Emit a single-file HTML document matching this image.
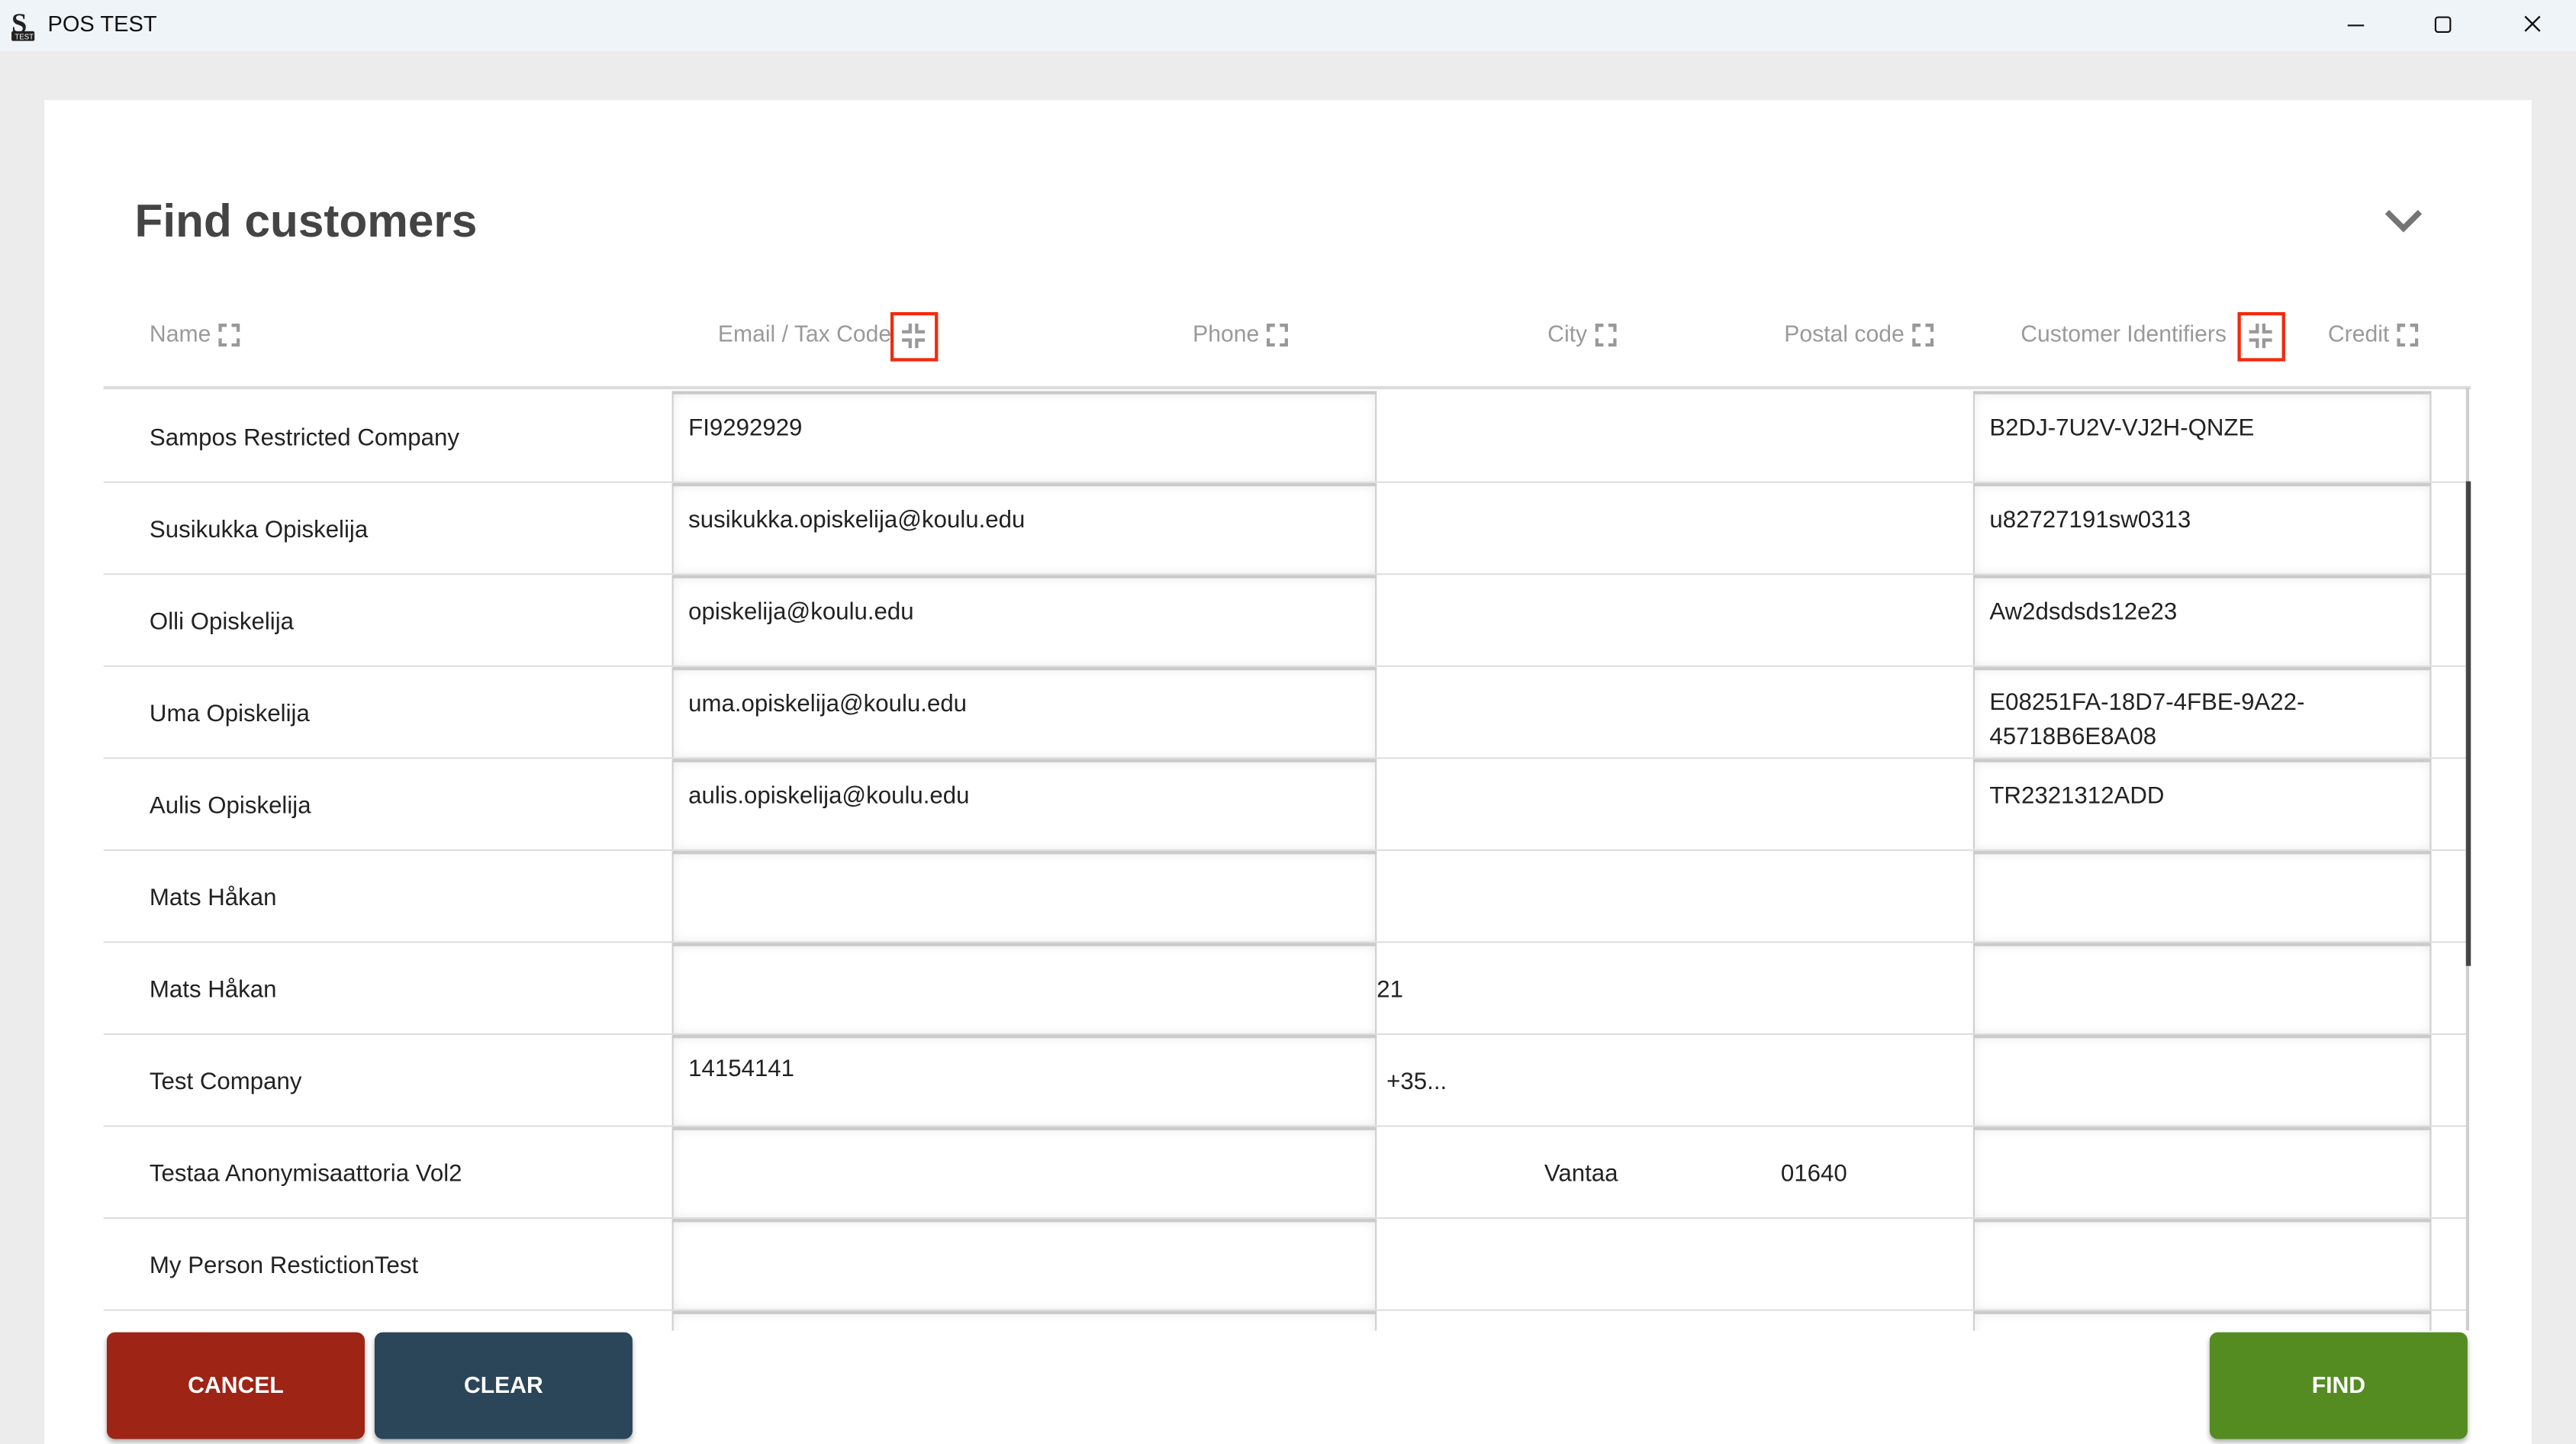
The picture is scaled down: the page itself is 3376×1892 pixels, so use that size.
<!DOCTYPE html>
<html><head><meta charset="utf-8"><style>
html,body{margin:0;padding:0;width:3376px;height:1892px;overflow:hidden;background:#ececec;}
#w{position:absolute;left:0;top:0;width:1568px;height:879px;transform:scale(2.15306,2.1524);transform-origin:0 0;font-family:"Liberation Sans",sans-serif;}
.a{position:absolute;white-space:nowrap;}
.tb{left:0;top:0;width:1568px;height:31px;background:#eff4f9;}
.panel{left:27px;top:61px;width:1514px;height:818px;background:#fff;}
.h{color:#9a9a9a;font-size:14px;top:195px;}
.ic{display:inline-block;width:13px;height:14px;vertical-align:-3px;margin-left:5px;}
.rb{border:2px solid #f22a0f;width:25px;height:26px;top:190px;}
.row{left:0;width:1438px;height:55px;border-bottom:1.5px solid #dedede;}
.t{font-size:14.5px;color:#222;}
.cell{background:#fff;border-left:1.5px solid #cfcfcf;border-right:1.5px solid #cfcfcf;border-top:2.5px solid #cacaca;box-shadow:0 0 6px rgba(0,0,0,.08) inset;}
.btn{top:811px;width:157px;height:65px;border-radius:5px;color:#fff;font-weight:bold;font-size:14px;text-align:center;line-height:65px;box-shadow:0 2px 3px rgba(0,0,0,.3);}
</style></head><body><div id="w">
<div class="a tb"></div>
<svg class="a" style="left:6px;top:6px" width="17" height="19" viewBox="0 0 17 19"><text x="1" y="14" font-family="Liberation Serif" font-weight="bold" font-size="17" fill="#222">S</text><rect x="1" y="13" width="14" height="6" rx="1" fill="#222"/><text x="3" y="18" font-size="4.5" fill="#fff">TEST</text></svg>
<div class="a" style="left:29px;top:7px;font-size:13.5px;color:#111;">POS TEST</div>
<div class="a" style="left:1429px;top:15px;width:10px;height:1px;background:#111"></div>
<div class="a" style="left:1482px;top:10px;width:8px;height:8px;border:1px solid #111;border-radius:2px"></div>
<svg class="a" style="left:1536px;top:9px" width="11" height="11"><path d="M1 1L10 10M10 1L1 10" stroke="#111" stroke-width="1.1"/></svg>
<div class="a panel"></div>
<div class="a" style="left:82px;top:119px;font-size:28px;font-weight:bold;color:#444;">Find customers</div>
<svg class="a" style="left:1451px;top:126px" width="24" height="16"><path d="M2 3L12 13L22 3" stroke="#747474" stroke-width="3.5" fill="none"/></svg>

<div class="a h" style="left:91px">Name<svg class="ic" viewBox="0 0 13 14"><path d="M1 5V1H5M8 1H12V5M12 9V13H8M5 13H1V9" stroke="#999" stroke-width="2" fill="none"/></svg></div>
<div class="a h" style="left:437px">Email / Tax Code</div>
<svg class="a" style="left:549px;top:197px" width="14" height="15"><path d="M5 0V5H0M9 0V5H14M14 10H9V15M5 15V10H0" stroke="#999" stroke-width="2" fill="none"/></svg>
<div class="a rb" style="left:542px"></div>
<div class="a h" style="left:726px">Phone<svg class="ic" viewBox="0 0 13 14"><path d="M1 5V1H5M8 1H12V5M12 9V13H8M5 13H1V9" stroke="#999" stroke-width="2" fill="none"/></svg></div>
<div class="a h" style="left:942px">City<svg class="ic" viewBox="0 0 13 14"><path d="M1 5V1H5M8 1H12V5M12 9V13H8M5 13H1V9" stroke="#999" stroke-width="2" fill="none"/></svg></div>
<div class="a h" style="left:1086px">Postal code<svg class="ic" viewBox="0 0 13 14"><path d="M1 5V1H5M8 1H12V5M12 9V13H8M5 13H1V9" stroke="#999" stroke-width="2" fill="none"/></svg></div>
<div class="a h" style="left:1230px">Customer Identifiers</div>
<svg class="a" style="left:1369px;top:197px" width="14" height="15"><path d="M5 0V5H0M9 0V5H14M14 10H9V15M5 15V10H0" stroke="#999" stroke-width="2" fill="none"/></svg>
<div class="a rb" style="left:1362px"></div>
<div class="a h" style="left:1417px">Credit<svg class="ic" viewBox="0 0 13 14"><path d="M1 5V1H5M8 1H12V5M12 9V13H8M5 13H1V9" stroke="#999" stroke-width="2" fill="none"/></svg></div>

<div class="a" style="left:63px;top:235px;width:1441px;height:2px;background:#dcdcdc"></div>
<div class="a" style="left:63px;top:238px;width:1441px;height:572px;overflow:hidden;">
<div style="position:absolute;left:0;top:0;width:1441px;height:572px;">
<div class="a row" style="top:0"></div><div class="a row" style="top:56px"></div><div class="a row" style="top:112px"></div><div class="a row" style="top:168px"></div><div class="a row" style="top:224px"></div><div class="a row" style="top:280px"></div><div class="a row" style="top:336px"></div><div class="a row" style="top:392px"></div><div class="a row" style="top:448px"></div><div class="a row" style="top:504px"></div>
<div class="a t" style="left:28px;top:21px">Sampos Restricted Company</div>
<div class="a t" style="left:28px;top:77px">Susikukka Opiskelija</div>
<div class="a t" style="left:28px;top:133px">Olli Opiskelija</div>
<div class="a t" style="left:28px;top:189px">Uma Opiskelija</div>
<div class="a t" style="left:28px;top:245px">Aulis Opiskelija</div>
<div class="a t" style="left:28px;top:301px">Mats Håkan</div>
<div class="a t" style="left:28px;top:357px">Mats Håkan</div>
<div class="a t" style="left:28px;top:413px">Test Company</div>
<div class="a t" style="left:28px;top:469px">Testaa Anonymisaattoria Vol2</div>
<div class="a t" style="left:28px;top:525px">My Person RestictionTest</div>
<div class="a t" style="left:775px;top:357px">21</div>
<div class="a t" style="left:781px;top:413px">+35...</div>
<div class="a t" style="left:877px;top:469px">Vantaa</div>
<div class="a t" style="left:1021px;top:469px">01640</div>
<div class="a cell" style="left:346px;top:0;width:427px;height:53px"></div>
<div class="a cell" style="left:346px;top:56px;width:427px;height:53px"></div>
<div class="a cell" style="left:346px;top:112px;width:427px;height:53px"></div>
<div class="a cell" style="left:346px;top:168px;width:427px;height:53px"></div>
<div class="a cell" style="left:346px;top:224px;width:427px;height:53px"></div>
<div class="a cell" style="left:346px;top:280px;width:427px;height:53px"></div>
<div class="a cell" style="left:346px;top:336px;width:427px;height:53px"></div>
<div class="a cell" style="left:346px;top:392px;width:427px;height:53px"></div>
<div class="a cell" style="left:346px;top:448px;width:427px;height:53px"></div>
<div class="a cell" style="left:346px;top:504px;width:427px;height:53px"></div>
<div class="a cell" style="left:346px;top:560px;width:427px;height:53px"></div>
<div class="a t" style="left:356px;top:15px">FI9292929</div>
<div class="a t" style="left:356px;top:71px">susikukka.opiskelija@koulu.edu</div>
<div class="a t" style="left:356px;top:127px">opiskelija@koulu.edu</div>
<div class="a t" style="left:356px;top:183px">uma.opiskelija@koulu.edu</div>
<div class="a t" style="left:356px;top:239px">aulis.opiskelija@koulu.edu</div>
<div class="a t" style="left:356px;top:405px">14154141</div>
<div class="a cell" style="left:1138px;top:0;width:277px;height:53px"></div>
<div class="a cell" style="left:1138px;top:56px;width:277px;height:53px"></div>
<div class="a cell" style="left:1138px;top:112px;width:277px;height:53px"></div>
<div class="a cell" style="left:1138px;top:168px;width:277px;height:53px"></div>
<div class="a cell" style="left:1138px;top:224px;width:277px;height:53px"></div>
<div class="a cell" style="left:1138px;top:280px;width:277px;height:53px"></div>
<div class="a cell" style="left:1138px;top:336px;width:277px;height:53px"></div>
<div class="a cell" style="left:1138px;top:392px;width:277px;height:53px"></div>
<div class="a cell" style="left:1138px;top:448px;width:277px;height:53px"></div>
<div class="a cell" style="left:1138px;top:504px;width:277px;height:53px"></div>
<div class="a cell" style="left:1138px;top:560px;width:277px;height:53px"></div>
<div class="a t" style="left:1148px;top:15px">B2DJ-7U2V-VJ2H-QNZE</div>
<div class="a t" style="left:1148px;top:71px">u82727191sw0313</div>
<div class="a t" style="left:1148px;top:127px">Aw2dsdsds12e23</div>
<div class="a t" style="left:1148px;line-height:21px;top:180px">E08251FA-18D7-4FBE-9A22-<br>45718B6E8A08</div>
<div class="a t" style="left:1148px;top:239px">TR2321312ADD</div>
</div></div>
<div class="a" style="left:1501px;top:236px;width:2px;height:574px;background:#cfcfcf"></div>
<div class="a" style="left:1501px;top:293px;width:3px;height:295px;background:#444"></div>

<div class="a btn" style="left:65px;background:#9e2416">CANCEL</div>
<div class="a btn" style="left:228px;background:#2b4659">CLEAR</div>
<div class="a btn" style="left:1345px;background:#548c22">FIND</div>
</div></body></html>
